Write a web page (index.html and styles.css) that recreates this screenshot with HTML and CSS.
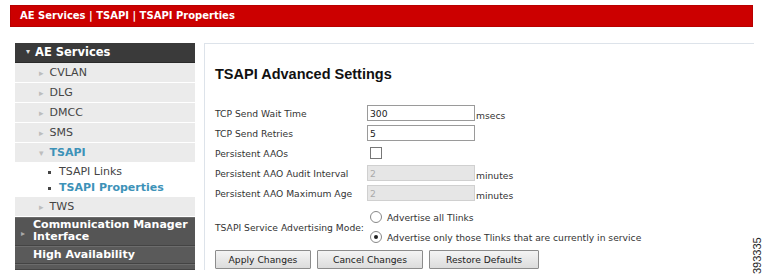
FILE: index.html
```html
<!DOCTYPE html>
<html lang="en">
<head>
  <meta charset="UTF-8">
  <title>TSAPI Properties</title>
  <link rel="stylesheet" href="styles.css">
</head>
<body>
  <div class="topbar">AE Services | TSAPI | TSAPI Properties</div>

  <div class="main">
    <div class="sidebar">
      <div class="nav-head"><span class="arrow-down">&#9662;</span>AE Services</div>
      <div class="nav-item"><span class="arrow">&#9656;</span>CVLAN</div>
      <div class="nav-item"><span class="arrow">&#9656;</span>DLG</div>
      <div class="nav-item"><span class="arrow">&#9656;</span>DMCC</div>
      <div class="nav-item"><span class="arrow">&#9656;</span>SMS</div>
      <div class="nav-item active"><span class="arrow">&#9662;</span>TSAPI</div>
      <ul class="sub-list">
        <li>TSAPI Links</li>
        <li class="current">TSAPI Properties</li>
      </ul>
      <div class="nav-item"><span class="arrow">&#9656;</span>TWS</div>
      <div class="nav-dark two-line"><span class="arrow-dark">&#9656;</span>Communication Manager<br>Interface</div>
      <div class="nav-dark">High Availability</div>
      <div class="nav-dark last"></div>
    </div>

    <div class="content">
      <h2 class="title">TSAPI Advanced Settings</h2>
      <div class="form">
        <div class="row">
          <span class="label">TCP Send Wait Time</span>
          <input class="field" type="text" value="300">
          <span class="unit">msecs</span>
        </div>
        <div class="row">
          <span class="label">TCP Send Retries</span>
          <input class="field" type="text" value="5">
        </div>
        <div class="row">
          <span class="label">Persistent AAOs</span>
          <span class="check"></span>
        </div>
        <div class="row">
          <span class="label">Persistent AAO Audit Interval</span>
          <input class="field disabled" type="text" value="2" disabled>
          <span class="unit">minutes</span>
        </div>
        <div class="row">
          <span class="label">Persistent AAO Maximum Age</span>
          <input class="field disabled" type="text" value="2" disabled>
          <span class="unit">minutes</span>
        </div>
        <div class="row radio-row">
          <span class="label">TSAPI Service Advertising Mode:</span>
          <div class="radios">
            <div class="radio-line"><span class="radio"></span>Advertise all Tlinks</div>
            <div class="radio-line"><span class="radio checked"></span>Advertise only those Tlinks that are currently in service</div>
          </div>
        </div>
      </div>
      <div class="buttons">
        <button class="button btn-apply">Apply Changes</button>
        <button class="button btn-cancel">Cancel Changes</button>
        <button class="button btn-restore">Restore Defaults</button>
      </div>
    </div>

    <div class="fig-number">393335</div>
  </div>
</body>
</html>
```

FILE: styles.css
```css
body {
  margin: 0;
  background-color: #fff;
  font-family: "DejaVu Sans", Verdana, sans-serif;
  width: 765px;
  height: 280px;
  overflow: hidden;
}

.topbar {
  margin: 5px 12px 0 10px;
  height: 20px;
  line-height: 20px;
  background-color: #cc0000;
  border: 1px solid #b80000;
  color: #fff;
  font-size: 10px;
  font-weight: bold;
  padding-left: 9px;
}

.main {
  display: flex;
  margin-top: 16px;
  position: relative;
}

/* left navigation */
.sidebar {
  width: 180px;
  margin-left: 15px;
  flex-shrink: 0;
}

.nav-head {
  height: 19px;
  line-height: 19px;
  background-color: #3a3a3a;
  color: #fff;
  font-weight: bold;
  font-size: 11.5px;
  padding-left: 11px;
  border-bottom: 1px solid #2a2a2a;
}

.arrow-down {
  font-size: 8px;
  margin-right: 5px;
  color: #ddd;
  position: relative;
  top: -2px;
}

.nav-item {
  height: 19px;
  line-height: 19px;
  background-color: #ebebeb;
  border-bottom: 1px solid #fff;
  color: #444;
  font-size: 11px;
  padding-left: 24px;
}

.nav-item .arrow {
  color: #bdbdbd;
  font-size: 9px;
  margin-right: 6px;
}

.nav-item.active {
  color: #3d92b8;
  font-weight: bold;
}

.nav-item.active .arrow {
  font-weight: normal;
}

.sub-list {
  list-style: none;
  margin: 0;
  padding: 1px 0 1px 33px;
  background-color: #fff;
  font-size: 11px;
  color: #444;
}

.sub-list li {
  height: 16px;
  line-height: 16px;
}

.sub-list li::before {
  content: "";
  display: inline-block;
  width: 3px;
  height: 3px;
  background-color: #444;
  margin-right: 8px;
  vertical-align: middle;
}

.sub-list li.current {
  color: #3d92b8;
  font-weight: bold;
}

.nav-dark {
  background-color: #5a5a5a;
  color: #fff;
  font-weight: bold;
  font-size: 11px;
  line-height: 16px;
  padding-left: 18px;
  border-top: 1px solid #6c6c6c;
  border-bottom: 1px solid #444;
}

.nav-dark.two-line {
  line-height: 12px;
  padding-top: 1px;
  padding-bottom: 2px;
  background-color: #555;
  position: relative;
}

.arrow-dark {
  position: absolute;
  left: 6px;
  top: 10px;
  font-size: 8px;
  color: #aaa;
  font-weight: normal;
}

.nav-dark.last {
  height: 4px;
}

/* main panel */
.content {
  margin-left: 9px;
  width: 539px;
  border-top: 1px solid #dde3ea;
  border-left: 1px solid #dde3ea;
  padding: 22px 0 0 10px;
  color: #333;
}

.title {
  font-family: "Liberation Sans", Arial, sans-serif;
  font-size: 14.5px;
  font-weight: bold;
  color: #111;
  margin: 0 0 21px 0;
}

.form {
  font-size: 9.2px;
}

.row {
  display: flex;
  align-items: center;
  height: 20px;
}

.label {
  width: 152px;
  flex-shrink: 0;
  white-space: nowrap;
}

.field {
  width: 104px;
  height: 14px;
  border: 1px solid #9a9a9a;
  padding: 0 0 0 2px;
  margin: 0;
  font-family: "DejaVu Sans", Verdana, sans-serif;
  font-size: 9.2px;
  color: #222;
  background-color: #fff;
}

.field.disabled {
  background-color: #e6e6e6;
  border-color: #d0d0d0;
  color: #aaa;
}

.unit {
  margin-left: 1px;
  padding-top: 5px;
}

.check {
  width: 10px;
  height: 10px;
  border: 1px solid #777;
  margin-left: 3px;
  background-color: #fff;
}

.radio-row {
  height: 42px;
  margin-top: 3px;
}

.radios {
  display: flex;
  flex-direction: column;
  gap: 8px;
}

.radio-line {
  display: flex;
  align-items: center;
}

.radio {
  width: 10px;
  height: 10px;
  border: 1px solid #888;
  border-radius: 50%;
  margin: 0 5px 0 3px;
  background-color: #fff;
  position: relative;
}

.radio.checked::after {
  content: "";
  position: absolute;
  left: 3px;
  top: 3px;
  width: 4px;
  height: 4px;
  border-radius: 50%;
  background-color: #222;
}

.buttons {
  display: flex;
  gap: 6px;
  margin-top: 2px;
}

.button {
  height: 19px;
  padding: 0;
  font-family: "DejaVu Sans", Verdana, sans-serif;
  font-size: 9.2px;
  color: #222;
  background: linear-gradient(#f4f4f4, #dcdcdc);
  border: 1px solid #8c8c8c;
  border-radius: 1px;
}

.btn-apply {
  width: 96px;
}

.btn-cancel {
  width: 106px;
}

.btn-restore {
  width: 110px;
}

.fig-number {
  position: absolute;
  left: 751px;
  top: 231px;
  font-family: "Liberation Sans", Arial, sans-serif;
  font-size: 11px;
  color: #222;
  transform: rotate(-90deg);
  transform-origin: left top;
}
```
